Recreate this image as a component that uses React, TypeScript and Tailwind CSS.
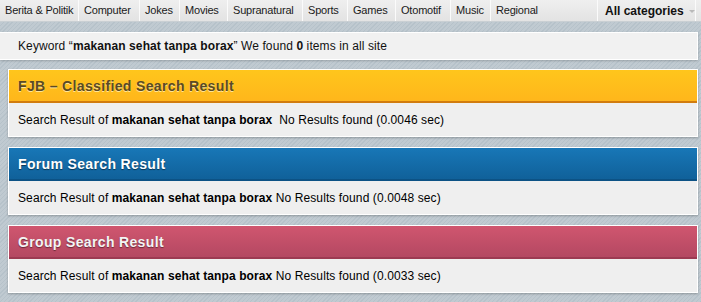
import type { ReactElement } from 'react'

const navItems: readonly { label: string; width: string }[] = [
  { label: 'Berita & Politik', width: 'w-[79px]' },
  { label: 'Computer', width: 'w-[61px]' },
  { label: 'Jokes', width: 'w-[40px]' },
  { label: 'Movies', width: 'w-[48px]' },
  { label: 'Supranatural', width: 'w-[75px]' },
  { label: 'Sports', width: 'w-[45px]' },
  { label: 'Games', width: 'w-[48px]' },
  { label: 'Otomotif', width: 'w-[55px]' },
  { label: 'Music', width: 'w-[40px]' },
  { label: 'Regional', width: 'w-[107px]' },
]

const KEYWORD = 'makanan sehat tanpa borax'

interface PanelProps {
  readonly title: string
  readonly headerClass: string
  readonly titleClass: string
  readonly time: string
  readonly gap?: boolean
}

function ResultPanel({ title, headerClass, titleClass, time, gap }: PanelProps): ReactElement {
  return (
    <section className="w-[690px] border border-white bg-[#efefef] shadow-[0_1px_2px_rgba(0,0,0,0.25)]">
      <header className={`flex h-[33px] items-center border-b-2 pl-[9px] ${headerClass}`}>
        <h2 className={`m-0 text-[14px] font-bold leading-none tracking-[0.35px] ${titleClass}`}>{title}</h2>
      </header>
      <p className="m-0 flex h-[33px] items-center pl-[9px] text-[12px] tracking-[0.1px] text-black">
        Search Result of&nbsp;<strong>{KEYWORD}</strong>
        {gap ? '\u00a0\u00a0' : '\u00a0'}No Results found ({time} sec)
      </p>
    </section>
  )
}

export default function App(): ReactElement {
  return (
    <div className="h-[302px] w-[701px] overflow-hidden bg-[repeating-linear-gradient(135deg,#b6c2ca_0px,#b6c2ca_1px,#c0cad1_1px,#c0cad1_3px)] font-['Liberation_Sans',Arial,sans-serif]">
      <nav className="flex h-[22px] border-b border-[#c9cfd3] bg-gradient-to-b from-[#efefef] to-[#e3e3e3] text-[11px] tracking-[-0.2px] text-[#1a1a1a]">
        {navItems.map((item) => (
          <a
            key={item.label}
            className={`flex h-full items-center border-r border-[#fbfbfb] pl-[5px] ${item.width}`}
          >
            <span className="whitespace-nowrap">{item.label}</span>
          </a>
        ))}
        <a className="flex h-full w-[98px] items-center border-r border-[#fbfbfb] pl-[7px] font-bold text-[12px] tracking-normal text-[#111]">
          All categories
          <span className="ml-[5px] mt-[2px] h-0 w-0 border-x-[3px] border-t-[3px] border-x-transparent border-t-[#b9b9b9]" />
        </a>
      </nav>

      <div className="mt-[10px] flex h-[28px] w-[698px] items-center border border-l-0 border-white bg-[#f1f1f1] pl-[18px] text-[12px] tracking-[0.1px] text-[#111] shadow-[0_1px_2px_rgba(0,0,0,0.2)]">
        Keyword “<strong>{KEYWORD}</strong>” We found&nbsp;<strong>0</strong>&nbsp;items in all site
      </div>

      <div className="ml-[8px] mt-[9px] flex flex-col gap-[10px]">
        <ResultPanel
          title="FJB – Classified Search Result"
          headerClass="bg-gradient-to-b from-[#ffc61c] to-[#ffb61b] border-[#d17c0e]"
          titleClass="text-[#5b4a24] [text-shadow:0_1px_0_rgba(255,235,170,0.9)]"
          time="0.0046"
          gap
        />
        <ResultPanel
          title="Forum Search Result"
          headerClass="bg-gradient-to-b from-[#1877b7] to-[#10619a] border-[#0c5285]"
          titleClass="text-white [text-shadow:0_1px_1px_rgba(0,0,0,0.5)]"
          time="0.0048"
        />
        <ResultPanel
          title="Group Search Result"
          headerClass="bg-gradient-to-b from-[#d0566f] to-[#b44862] border-[#9c3a52]"
          titleClass="text-[#f4f4f4] [text-shadow:0_1px_1px_rgba(0,0,0,0.45)]"
          time="0.0033"
        />
      </div>
    </div>
  )
}
